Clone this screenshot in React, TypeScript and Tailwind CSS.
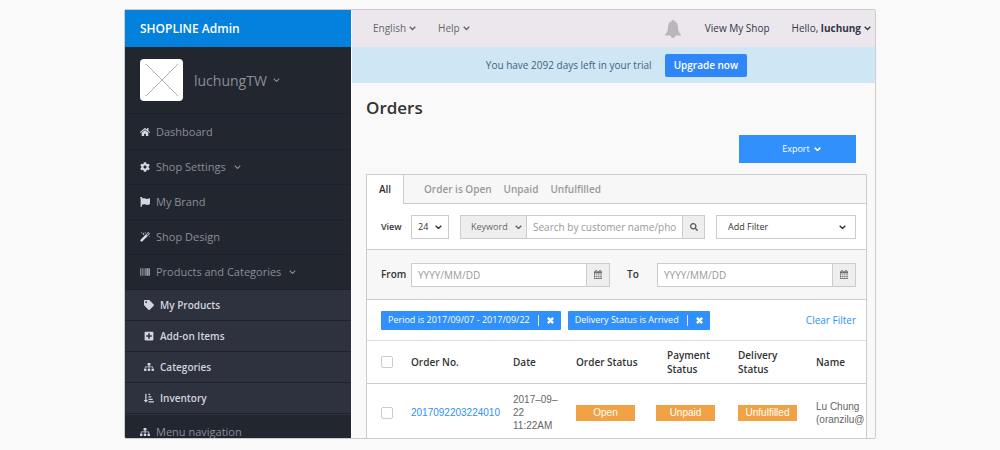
import type { ComponentType, ReactNode } from 'react';
import {
  FaBarcode,
  FaCog,
  FaFlag,
  FaHome,
  FaPlusSquare,
  FaSearch,
  FaSitemap,
  FaSortAmountDownAlt,
  FaTag,
} from 'react-icons/fa';

type IconType = ComponentType<{ className?: string }>;

function Chevron({ className = '', weight = 2.4 }: { className?: string; weight?: number }) {
  return (
    <svg viewBox="0 0 12 8" className={className} fill="none" stroke="currentColor" strokeWidth={weight} aria-hidden="true">
      <path d="M1.200 1.200 6 6l4.800-4.800" />
    </svg>
  );
}

function Cross({ className = '' }: { className?: string }) {
  return (
    <svg viewBox="0 0 8 8" className={className} stroke="currentColor" strokeWidth="2.6" aria-hidden="true">
      <path d="M1 1l6 6M7 1L1 7" />
    </svg>
  );
}

function Wand({ className = '' }: { className?: string }) {
  return (
    <svg viewBox="0 0 1664 1664" className={className} fill="currentColor" aria-hidden="true">
      <path d="M1190 581l293-293-107-107-293 293zm447-293q0 27-18 45L333 1619q-18 18-45 18t-45-18L45 1421q-18-18-18-45t18-45L1331 45q18-18 45-18t45 18l198 198q18 18 18 45zM286 98l98 30-98 30-30 98-30-98-98-30 98-30 30-98zm350 162l196 60-196 60-60 196-60-196-196-60 196-60 60-196zm930 478l98 30-98 30-30 98-30-98-98-30 98-30 30-98zM926 98l98 30-98 30-30 98-30-98-98-30 98-30 30-98z" />
    </svg>
  );
}

function Calendar({ className = '' }: { className?: string }) {
  return (
    <svg viewBox="0 0 1664 1792" className={className} fill="currentColor" aria-hidden="true">
      <path d="M128 1664h288v-288H128v288zm352 0h320v-288H480v288zm-352-352h288V992H128v320zm352 0h320V992H480v320zM128 928h288V640H128v288zm736 736h320v-288H864v288zM480 928h320V640H480v288zm768 736h288v-288h-288v288zm-384-352h320V992H864v320zM512 448V160q0-13-9.500-22.500T480 128h-64q-13 0-22.500 9.500T384 160v288q0 13 9.500 22.500T416 480h64q13 0 22.500-9.500T512 448zm736 864h288V992h-288v320zM864 928h320V640H864v288zm384 0h288V640h-288v288zm32-480V160q0-13-9.500-22.500T1248 128h-64q-13 0-22.500 9.500T1152 160v288q0 13 9.500 22.500t22.500 9.500h64q13 0 22.500-9.500t9.500-22.500zm384-64v1280q0 52-38 90t-90 38H128q-52 0-90-38t-38-90V384q0-52 38-90t90-38h128v-96q0-66 47-113T416 0h64q66 0 113 47t47 113v96h384v-96q0-66 47-113t113-47h64q66 0 113 47t47 113v96h128q52 0 90 38t38 90z" />
    </svg>
  );
}

function Bell({ className = '' }: { className?: string }) {
  return (
    <svg viewBox="0 0 16 18" className={className} fill="currentColor" aria-hidden="true">
      <path d="M8 0c.9 0 1.400.6 1.400 1.300C11.800 2 12.800 3.900 12.900 6.200c.1 3.700.7 6.200 2.700 8 .6.600.4 1.300-.4 1.300H.8c-.8 0-1-.7-.4-1.300 2-1.800 2.600-4.300 2.700-8C3.200 3.900 4.200 2 6.600 1.300 6.600.6 7.100 0 8 0zM5.500 15h5c0 1.900-1.100 3-2.500 3s-2.500-1.100-2.500-3z" />
    </svg>
  );
}

const menu: { label: string; icon: IconType; open?: boolean }[] = [
  { label: 'Dashboard', icon: FaHome },
  { label: 'Shop Settings', icon: FaCog, open: true },
  { label: 'My Brand', icon: FaFlag },
  { label: 'Shop Design', icon: Wand },
  { label: 'Products and Categories', icon: FaBarcode, open: true },
];

const submenu: { label: string; icon: IconType }[] = [
  { label: 'My Products', icon: FaTag },
  { label: 'Add-on Items', icon: FaPlusSquare },
  { label: 'Categories', icon: FaSitemap },
  { label: 'Inventory', icon: FaSortAmountDownAlt },
];

function MenuItem({ label, icon: Icon, open }: { label: string; icon: IconType; open?: boolean }) {
  return (
    <li>
      <a href="#" className="flex h-[35px] items-center border-b border-[#1e212b] px-[15px] text-[11px] text-[#8b8d99]">
        <Icon className="mr-[6px] size-[10px] text-[#d5d6de]" />
        {label}
        {open && <Chevron weight={1.8} className="ml-[8px] w-[7px]" />}
      </a>
    </li>
  );
}

function Sidebar() {
  return (
    <aside className="w-[226px] shrink-0 bg-[#22262f]">
      <div className="flex h-[37px] items-center bg-[#0480dd] px-[15px] text-[12px] font-semibold text-white">SHOPLINE Admin</div>
      <button className="flex h-[67px] w-full items-center border-b border-[#1e212b] px-[15px] text-[14px] text-[#8b8d99]">
        <span className="flex h-[42px] w-[43px] items-center justify-center rounded-[4px] bg-white">
          <svg viewBox="0 0 32 32" className="size-[32px]" stroke="#999" strokeWidth="0.8" aria-hidden="true">
            <path d="M0 0l32 32M32 0L0 32" />
          </svg>
        </span>
        <span className="ml-[11px]">luchungTW</span>
        <Chevron weight={1.8} className="ml-[6px] w-[7px]" />
      </button>
      <nav className="pt-px">
        <ul>
          {menu.map((m) => (
            <MenuItem key={m.label} {...m} />
          ))}
          <li>
            <ul className="bg-[#2d323e] pb-px">
              {submenu.map(({ label, icon: Icon }) => (
                <li key={label}>
                  <a href="#" className="flex h-[31px] items-center border-b border-[#1f222c] px-[19px] text-[10px] font-semibold text-[#d3d4dc]">
                    <Icon className="mr-[6px] size-[10px]" />
                    {label}
                  </a>
                </li>
              ))}
            </ul>
          </li>
          <MenuItem label="Menu navigation" icon={FaSitemap} />
        </ul>
      </nav>
    </aside>
  );
}

function DateField({ id, label }: { id: string; label: string }) {
  return (
    <div className="flex flex-1 items-center">
      <label htmlFor={id} className="w-[30px] shrink-0 text-[10px] font-semibold text-[#333]">
        {label}
      </label>
      <input
        id={id}
        placeholder="YYYY/MM/DD"
        className="h-[24px] min-w-0 flex-1 border border-[#ccc] bg-white px-[6px] text-[10px] placeholder:text-[#999]"
      />
      <button aria-label={`Pick ${label} date`} className="flex h-[24px] w-[23px] items-center justify-center border border-l-0 border-[#ccc] bg-[#eee] text-[#666]">
        <Calendar className="h-[9px]" />
      </button>
    </div>
  );
}

function Chip({ children }: { children: ReactNode }) {
  return (
    <span className="flex h-[19px] items-center rounded-[1px] bg-[#3190fb] px-[7px] text-[9px] text-white">
      {children}
      <button aria-label="Remove filter" className="ml-[8px] flex h-[11px] items-center border-l border-white/80 pl-[8px]">
        <Cross className="size-[7px]" />
      </button>
    </span>
  );
}

function Badge({ children }: { children: ReactNode }) {
  return (
    <span className="flex h-[16px] w-[59px] items-center justify-center bg-[#f0a244] font-['Liberation_Sans',sans-serif] text-[10px] text-white">
      {children}
    </span>
  );
}

function OrdersTable() {
  return (
    <table className="w-full table-fixed border-collapse text-left">
      <colgroup>
        <col className="w-[44px]" />
        <col className="w-[102px]" />
        <col className="w-[63px]" />
        <col className="w-[80px]" />
        <col className="w-[82px]" />
        <col className="w-[78px]" />
        <col />
      </colgroup>
      <thead>
        <tr className="h-[42px] border-b border-[#ccc] text-[10px] leading-[14px] text-[#333] [&>th]:font-semibold">
          <th className="pl-[14px]">
            <input type="checkbox" aria-label="Select all orders" className="block size-[12px] appearance-none rounded-[2px] border border-[#ccc] bg-white" />
          </th>
          <th>Order No.</th>
          <th>Date</th>
          <th>Order Status</th>
          <th className="pr-[20px] pl-[11px]">Payment Status</th>
          <th className="pr-[20px]">Delivery Status</th>
          <th>Name</th>
        </tr>
      </thead>
      <tbody>
        <tr className="h-[59px] font-['Liberation_Sans',sans-serif] text-[10px] leading-[13px] text-[#666]">
          <td className="pl-[14px]">
            <input type="checkbox" aria-label="Select order" className="block size-[12px] appearance-none rounded-[2px] border border-[#ccc] bg-white" />
          </td>
          <td>
            <a href="#" className="text-[#3190fb]">
              2017092203224010
            </a>
          </td>
          <td>
            2017–09–
            <br />
            22
            <br />
            11:22AM
          </td>
          <td>
            <Badge>Open</Badge>
          </td>
          <td>
            <Badge>Unpaid</Badge>
          </td>
          <td>
            <Badge>Unfulfilled</Badge>
          </td>
          <td>
            Lu Chung
            <br />
            (oranzilu@
          </td>
        </tr>
      </tbody>
    </table>
  );
}

export default function App() {
  return (
    <div className="h-screen bg-[#f9f9f9] px-[124px] pt-[9px] pb-[11px] font-['Open_Sans',sans-serif]">
      <div className="flex h-full overflow-hidden rounded-[2px] border border-[#ccc]">
        <Sidebar />
        <div className="min-w-0 flex-1 border-l border-white">
          <header className="flex h-[37px] items-center bg-[#ece7ed] pr-[4px] pl-[21px] text-[10px] text-[#666]">
            <button className="flex items-center gap-[3px]">
              English <Chevron className="w-[7px]" />
            </button>
            <button className="ml-[22px] flex items-center gap-[3px]">
              Help <Chevron className="w-[7px]" />
            </button>
            <button aria-label="Notifications" className="ml-auto text-[#bbb6bc]">
              <Bell className="h-[18px]" />
            </button>
            <a href="#" className="ml-[24px] text-[#333547]">
              View My Shop
            </a>
            <button className="ml-[22px] flex items-center gap-[3px] text-[#333547]">
              <span>
                Hello, <b>luchung</b>
              </span>
              <Chevron className="w-[7px]" />
            </button>
          </header>
          <div className="flex h-[36px] items-center justify-center gap-[13px] bg-[#cfe7f5] pl-[6px] text-[10px] text-[#3c6480]">
            You have 2092 days left in your trial
            <button className="h-[23px] rounded-[2px] bg-[#2f86f8] px-[9px] font-semibold text-white">Upgrade now</button>
          </div>
          <main className="pr-[8px] pl-[14px]">
            <h1 className="pt-[13px] text-[17px] leading-[24px] font-semibold text-[#333]">Orders</h1>
            <div className="flex justify-end pt-[15px] pr-[11px]">
              <button className="flex h-[28px] w-[117px] items-center justify-center gap-[4px] bg-[#3190fb] pl-[8px] text-[9px] text-white">
                Export <Chevron weight={2.8} className="w-[7px]" />
              </button>
            </div>
            <section className="mt-[11px] border border-[#ccc] bg-white">
              <div className="flex h-[29px] bg-[#f7f7f7] text-[10px] font-semibold text-[#999]">
                <button className="w-[37px] border-r border-[#ccc] bg-white text-[#333]">All</button>
                <div className="flex flex-1 gap-[12px] border-b border-[#ccc] pl-[20px]">
                  <button>Order is Open</button>
                  <button>Unpaid</button>
                  <button>Unfulfilled</button>
                </div>
              </div>
              <div className="flex h-[45px] items-center gap-[11px] pr-[10px] pl-[14px] text-[9px] text-[#333]">
                <div className="flex items-center">
                  <label htmlFor="view" className="w-[30px] font-semibold">
                    View
                  </label>
                  <span className="relative">
                    <select id="view" className="block h-[24px] w-[38px] appearance-none border border-[#ccc] bg-white pl-[6px]">
                      <option>24</option>
                    </select>
                    <Chevron className="pointer-events-none absolute top-[10px] right-[7px] w-[7px]" />
                  </span>
                </div>
                <div className="flex min-w-0 flex-1">
                  <span className="relative text-[#666]">
                    <select aria-label="Search field" className="block h-[24px] w-[67px] appearance-none border border-[#ccc] bg-[#eee] pl-[10px]">
                      <option>Keyword</option>
                    </select>
                    <Chevron className="pointer-events-none absolute top-[10px] right-[5px] w-[7px]" />
                  </span>
                  <input
                    aria-label="Search orders"
                    placeholder="Search by customer name/pho"
                    className="h-[24px] min-w-0 flex-1 border-y border-[#ccc] bg-white pl-[6px] text-[10px] placeholder:text-[#999]"
                  />
                  <button aria-label="Search" className="flex h-[24px] w-[23px] items-center justify-center border border-[#ccc] bg-[#eee] text-[#555]">
                    <FaSearch className="size-[8px]" />
                  </button>
                </div>
                <span className="relative">
                  <select aria-label="Add Filter" className="block h-[24px] w-[140px] appearance-none border border-[#ccc] bg-white pl-[11px]">
                    <option>Add Filter</option>
                  </select>
                  <Chevron className="pointer-events-none absolute top-[10px] right-[10px] w-[7px]" />
                </span>
              </div>
              <div className="flex h-[51px] items-center gap-[17px] border-y border-[#ccc] bg-[#f7f7f7] pr-[10px] pl-[14px]">
                <DateField id="from" label="From" />
                <DateField id="to" label="To" />
              </div>
              <div className="flex h-[41px] items-center gap-[7px] border-b border-[#ddd] pr-[10px] pl-[14px]">
                <Chip>Period is 2017/09/07 - 2017/09/22</Chip>
                <Chip>Delivery Status is Arrived</Chip>
                <button className="ml-auto text-[10px] text-[#3190fb]">Clear Filter</button>
              </div>
              <OrdersTable />
            </section>
          </main>
        </div>
      </div>
    </div>
  );
}
